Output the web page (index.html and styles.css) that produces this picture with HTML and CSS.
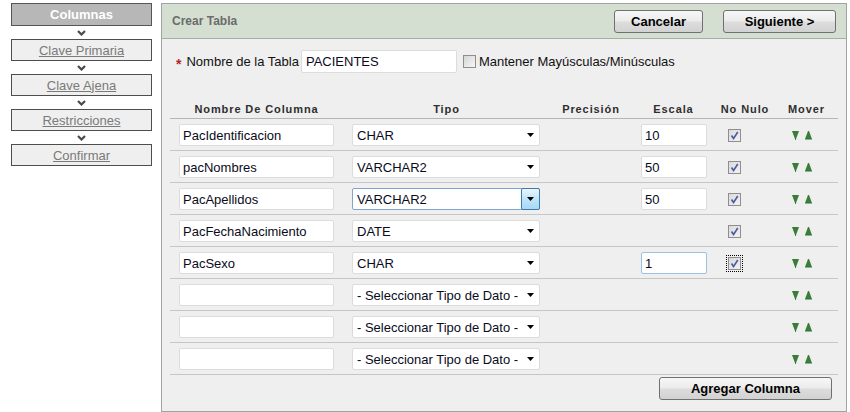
FILE: index.html
```html
<!DOCTYPE html>
<html lang="es">
<head>
<meta charset="utf-8">
<title>Crear Tabla</title>
<link rel="stylesheet" href="styles.css">
</head>
<body>
<div class="page">
  <nav class="steps">
    <div class="step active">Columnas</div>
    <div class="sep"><svg width="9" height="6" viewBox="0 0 9 6"><polyline points="1,1 4.5,4.5 8,1" fill="none" stroke="#4a4a4a" stroke-width="2.2"/></svg></div>
    <div class="step"><a href="#">Clave Primaria</a></div>
    <div class="sep"><svg width="9" height="6" viewBox="0 0 9 6"><polyline points="1,1 4.5,4.5 8,1" fill="none" stroke="#4a4a4a" stroke-width="2.2"/></svg></div>
    <div class="step"><a href="#">Clave Ajena</a></div>
    <div class="sep"><svg width="9" height="6" viewBox="0 0 9 6"><polyline points="1,1 4.5,4.5 8,1" fill="none" stroke="#4a4a4a" stroke-width="2.2"/></svg></div>
    <div class="step"><a href="#">Restricciones</a></div>
    <div class="sep"><svg width="9" height="6" viewBox="0 0 9 6"><polyline points="1,1 4.5,4.5 8,1" fill="none" stroke="#4a4a4a" stroke-width="2.2"/></svg></div>
    <div class="step"><a href="#">Confirmar</a></div>
  </nav>

  <section class="panel">
    <header class="panel-head">
      <span class="title">Crear Tabla</span>
      <div class="actions">
        <button class="btn btn-cancel">Cancelar</button>
        <button class="btn btn-next">Siguiente &gt;</button>
      </div>
    </header>

    <div class="panel-body">
      <div class="name-row">
        <span class="req">*</span>
        <label class="lbl">Nombre de la Tabla</label>
        <input class="txt table-in" value="PACIENTES">
        <span class="cb"></span>
        <span class="lbl keep">Mantener Mayúsculas/Minúsculas</span>
      </div>

      <div class="grid">
        <div class="row head">
          <div>Nombre De Columna</div>
          <div>Tipo</div>
          <div>Precisión</div>
          <div>Escala</div>
          <div>No Nulo</div>
          <div>Mover</div>
        </div>

        <div class="row">
          <div class="c1"><input class="txt name-in" value="PacIdentificacion"></div>
          <div class="c2"><span class="sel"><select><option>CHAR</option></select></span></div>
          <div></div>
          <div class="c4"><input class="txt esc-in" value="10"></div>
          <div class="c5"><span class="cb on"><svg width="11" height="11" viewBox="0 0 11 11"><path d="M2.5 5.5 L4.5 8.5 L8.8 2" fill="none" stroke="#4a5aa6" stroke-width="1.6"/></svg></span></div>
          <div class="c6"><svg class="dn" width="7" height="9" viewBox="0 0 7 9"><polygon points="0,0 7,0 4,8 3,8" fill="#3a7c3a"/><rect x="3" y="7" width="1" height="2" fill="#3a7c3a"/></svg><svg class="up" width="7" height="9" viewBox="0 0 7 9"><polygon points="3,0 4,0 7,8 0,8" fill="#3a7c3a"/><rect x="0" y="8" width="7" height="1" fill="#86b286"/></svg></div>
        </div>

        <div class="row">
          <div class="c1"><input class="txt name-in" value="pacNombres"></div>
          <div class="c2"><span class="sel"><select><option>VARCHAR2</option></select></span></div>
          <div></div>
          <div class="c4"><input class="txt esc-in" value="50"></div>
          <div class="c5"><span class="cb on"><svg width="11" height="11" viewBox="0 0 11 11"><path d="M2.5 5.5 L4.5 8.5 L8.8 2" fill="none" stroke="#4a5aa6" stroke-width="1.6"/></svg></span></div>
          <div class="c6"><svg class="dn" width="7" height="9" viewBox="0 0 7 9"><polygon points="0,0 7,0 4,8 3,8" fill="#3a7c3a"/><rect x="3" y="7" width="1" height="2" fill="#3a7c3a"/></svg><svg class="up" width="7" height="9" viewBox="0 0 7 9"><polygon points="3,0 4,0 7,8 0,8" fill="#3a7c3a"/><rect x="0" y="8" width="7" height="1" fill="#86b286"/></svg></div>
        </div>

        <div class="row">
          <div class="c1"><input class="txt name-in" value="PacApellidos"></div>
          <div class="c2"><span class="sel focus"><select><option>VARCHAR2</option></select></span></div>
          <div></div>
          <div class="c4"><input class="txt esc-in" value="50"></div>
          <div class="c5"><span class="cb on"><svg width="11" height="11" viewBox="0 0 11 11"><path d="M2.5 5.5 L4.5 8.5 L8.8 2" fill="none" stroke="#4a5aa6" stroke-width="1.6"/></svg></span></div>
          <div class="c6"><svg class="dn" width="7" height="9" viewBox="0 0 7 9"><polygon points="0,0 7,0 4,8 3,8" fill="#3a7c3a"/><rect x="3" y="7" width="1" height="2" fill="#3a7c3a"/></svg><svg class="up" width="7" height="9" viewBox="0 0 7 9"><polygon points="3,0 4,0 7,8 0,8" fill="#3a7c3a"/><rect x="0" y="8" width="7" height="1" fill="#86b286"/></svg></div>
        </div>

        <div class="row">
          <div class="c1"><input class="txt name-in" value="PacFechaNacimiento"></div>
          <div class="c2"><span class="sel"><select><option>DATE</option></select></span></div>
          <div></div>
          <div class="c4"></div>
          <div class="c5"><span class="cb on"><svg width="11" height="11" viewBox="0 0 11 11"><path d="M2.5 5.5 L4.5 8.5 L8.8 2" fill="none" stroke="#4a5aa6" stroke-width="1.6"/></svg></span></div>
          <div class="c6"><svg class="dn" width="7" height="9" viewBox="0 0 7 9"><polygon points="0,0 7,0 4,8 3,8" fill="#3a7c3a"/><rect x="3" y="7" width="1" height="2" fill="#3a7c3a"/></svg><svg class="up" width="7" height="9" viewBox="0 0 7 9"><polygon points="3,0 4,0 7,8 0,8" fill="#3a7c3a"/><rect x="0" y="8" width="7" height="1" fill="#86b286"/></svg></div>
        </div>

        <div class="row">
          <div class="c1"><input class="txt name-in" value="PacSexo"></div>
          <div class="c2"><span class="sel"><select><option>CHAR</option></select></span></div>
          <div></div>
          <div class="c4"><input class="txt esc-in focus" value="1"></div>
          <div class="c5"><span class="cb on dotted"><svg width="11" height="11" viewBox="0 0 11 11"><path d="M2.5 5.5 L4.5 8.5 L8.8 2" fill="none" stroke="#4a5aa6" stroke-width="1.6"/></svg></span></div>
          <div class="c6"><svg class="dn" width="7" height="9" viewBox="0 0 7 9"><polygon points="0,0 7,0 4,8 3,8" fill="#3a7c3a"/><rect x="3" y="7" width="1" height="2" fill="#3a7c3a"/></svg><svg class="up" width="7" height="9" viewBox="0 0 7 9"><polygon points="3,0 4,0 7,8 0,8" fill="#3a7c3a"/><rect x="0" y="8" width="7" height="1" fill="#86b286"/></svg></div>
        </div>

        <div class="row">
          <div class="c1"><input class="txt name-in" value=""></div>
          <div class="c2"><span class="sel"><select><option>- Seleccionar Tipo de Dato -</option></select></span></div>
          <div></div>
          <div class="c4"></div>
          <div class="c5"></div>
          <div class="c6"><svg class="dn" width="7" height="9" viewBox="0 0 7 9"><polygon points="0,0 7,0 4,8 3,8" fill="#3a7c3a"/><rect x="3" y="7" width="1" height="2" fill="#3a7c3a"/></svg><svg class="up" width="7" height="9" viewBox="0 0 7 9"><polygon points="3,0 4,0 7,8 0,8" fill="#3a7c3a"/><rect x="0" y="8" width="7" height="1" fill="#86b286"/></svg></div>
        </div>

        <div class="row">
          <div class="c1"><input class="txt name-in" value=""></div>
          <div class="c2"><span class="sel"><select><option>- Seleccionar Tipo de Dato -</option></select></span></div>
          <div></div>
          <div class="c4"></div>
          <div class="c5"></div>
          <div class="c6"><svg class="dn" width="7" height="9" viewBox="0 0 7 9"><polygon points="0,0 7,0 4,8 3,8" fill="#3a7c3a"/><rect x="3" y="7" width="1" height="2" fill="#3a7c3a"/></svg><svg class="up" width="7" height="9" viewBox="0 0 7 9"><polygon points="3,0 4,0 7,8 0,8" fill="#3a7c3a"/><rect x="0" y="8" width="7" height="1" fill="#86b286"/></svg></div>
        </div>

        <div class="row">
          <div class="c1"><input class="txt name-in" value=""></div>
          <div class="c2"><span class="sel"><select><option>- Seleccionar Tipo de Dato -</option></select></span></div>
          <div></div>
          <div class="c4"></div>
          <div class="c5"></div>
          <div class="c6"><svg class="dn" width="7" height="9" viewBox="0 0 7 9"><polygon points="0,0 7,0 4,8 3,8" fill="#3a7c3a"/><rect x="3" y="7" width="1" height="2" fill="#3a7c3a"/></svg><svg class="up" width="7" height="9" viewBox="0 0 7 9"><polygon points="3,0 4,0 7,8 0,8" fill="#3a7c3a"/><rect x="0" y="8" width="7" height="1" fill="#86b286"/></svg></div>
        </div>
      </div>

      <div class="footer">
        <button class="btn btn-add">Agregar Columna</button>
      </div>
    </div>
  </section>
</div>
</body>
</html>
```

FILE: styles.css
```css
* { box-sizing: border-box; }

body {
  margin: 0;
  background: #fff;
  font-family: "Liberation Sans", Arial, sans-serif;
  font-size: 13px;
  color: #000;
}

.page {
  display: flex;
  align-items: flex-start;
  gap: 9px;
  padding: 3px 0 0 11px;
}

/* ---------- wizard steps ---------- */
.steps {
  width: 141px;
  display: flex;
  flex-direction: column;
}

.step {
  height: 22px;
  border: 1px solid #4d4d4d;
  background: #efefef;
  display: flex;
  align-items: center;
  justify-content: center;
  font-size: 13px;
}

.step a {
  color: #7a7a7a;
  text-decoration: underline;
}

.step.active {
  height: 23px;
  background: #b7b7b7;
  color: #fff;
  font-weight: bold;
  border-color: #555;
}

.sep {
  height: 13px;
  display: flex;
  align-items: center;
  justify-content: center;
}

/* ---------- panel ---------- */
.panel {
  width: 686px;
  height: 409px;
  border: 1px solid #a2a2a2;
  background: #efefef;
  display: flex;
  flex-direction: column;
}

.panel-head {
  height: 35px;
  flex: none;
  background: #d5dfd1;
  border-bottom: 1px solid #a8aea6;
  display: flex;
  align-items: center;
  justify-content: space-between;
  padding: 0 10px;
}

.title {
  font-size: 12px;
  font-weight: bold;
  color: #6b6b6b;
}

.actions {
  display: flex;
  gap: 20px;
}

.btn {
  height: 23px;
  border: 1px solid #707070;
  border-radius: 3px;
  background: linear-gradient(#f7f7f7 0%, #ececec 45%, #dcdcdc 55%, #d2d2d2 100%);
  font-family: "Liberation Sans", Arial, sans-serif;
  font-size: 13px;
  font-weight: bold;
  color: #000;
  padding: 0;
}

.btn-cancel { width: 89px; }
.btn-next { width: 113px; }
.btn-add { width: 173px; }

.panel-body {
  padding: 11px 8px 0;
}

.name-row {
  height: 23px;
  display: flex;
  align-items: center;
  padding-left: 6px;
}

.req {
  color: #b3262a;
  font-weight: bold;
  font-size: 14px;
  margin-right: 5px;
  line-height: 1;
  padding-top: 4px;
}

.lbl {
  color: #111;
  font-size: 13px;
}

.txt {
  height: 22px;
  border: 1px solid #dcdcdc;
  border-radius: 2px;
  background: #fff;
  font-family: "Liberation Sans", Arial, sans-serif;
  font-size: 13px;
  color: #0a0a1a;
  padding: 0 3px;
  outline: none;
}

.table-in {
  width: 156px;
  height: 23px;
  margin: 0 6px 0 2px;
  padding-left: 4px;
}

.keep { margin-left: 3px; }

/* checkbox */
.cb {
  width: 13px;
  height: 13px;
  border: 1px solid #8e8e8e;
  background: linear-gradient(135deg, #d6d6d6, #f6f6f6);
  display: inline-flex;
  align-items: center;
  justify-content: center;
  flex: none;
}

.cb.on {
  background: linear-gradient(135deg, #dadada, #f2f2f2);
}

.cb.dotted {
  outline: 1px dotted #000;
  outline-offset: 1px;
}

/* ---------- grid ---------- */
.grid {
  margin-top: 26px;
}

.row {
  display: grid;
  grid-template-columns: 173px 207px 82px 83px 60px 63px;
  height: 32px;
  padding-top: 1px;
  border-bottom: 1px solid #c6c6c6;
  align-items: center;
}

.row.head {
  height: 20px;
  padding-top: 0;
  border-bottom-color: #b4b4b4;
  font-size: 11px;
  font-weight: bold;
  letter-spacing: 0.9px;
  color: #2e2e2e;
  text-align: center;
}

.c1, .c2, .c4 {
  display: flex;
  padding-left: 9px;
}

.c5 {
  display: flex;
  padding-left: 13px;
}

.c6 {
  display: flex;
  gap: 6px;
  padding-left: 17px;
}

.name-in { width: 155px; }
.esc-in { width: 66px; }
.esc-in.focus { border-color: #9dc1e6; }

.sel {
  position: relative;
  display: block;
  width: 188px;
  height: 22px;
}

.sel select {
  width: 100%;
  height: 100%;
  appearance: none;
  -webkit-appearance: none;
  border: 1px solid #dcdcdc;
  border-radius: 2px;
  background: #fff;
  font-family: "Liberation Sans", Arial, sans-serif;
  font-size: 13px;
  color: #0a0a1a;
  padding: 0 0 0 4px;
  outline: none;
}

.sel::after {
  content: "";
  position: absolute;
  right: 6px;
  top: 9px;
  width: 7px;
  height: 4px;
  background: #000;
  clip-path: polygon(0 0, 100% 0, 50% 100%);
}

.sel.focus select {
  border-color: #7fa6d2;
}

.sel.focus::before {
  content: "";
  position: absolute;
  right: 0;
  top: 0;
  bottom: 0;
  width: 17px;
  border: 1px solid #3d7bad;
  border-radius: 2px;
  background: linear-gradient(#eaf6fd, #bfe4fa 50%, #a7d9f5);
}

/* ---------- footer ---------- */
.footer {
  display: flex;
  justify-content: flex-end;
  padding-right: 6px;
  margin-top: 2px;
}
```
